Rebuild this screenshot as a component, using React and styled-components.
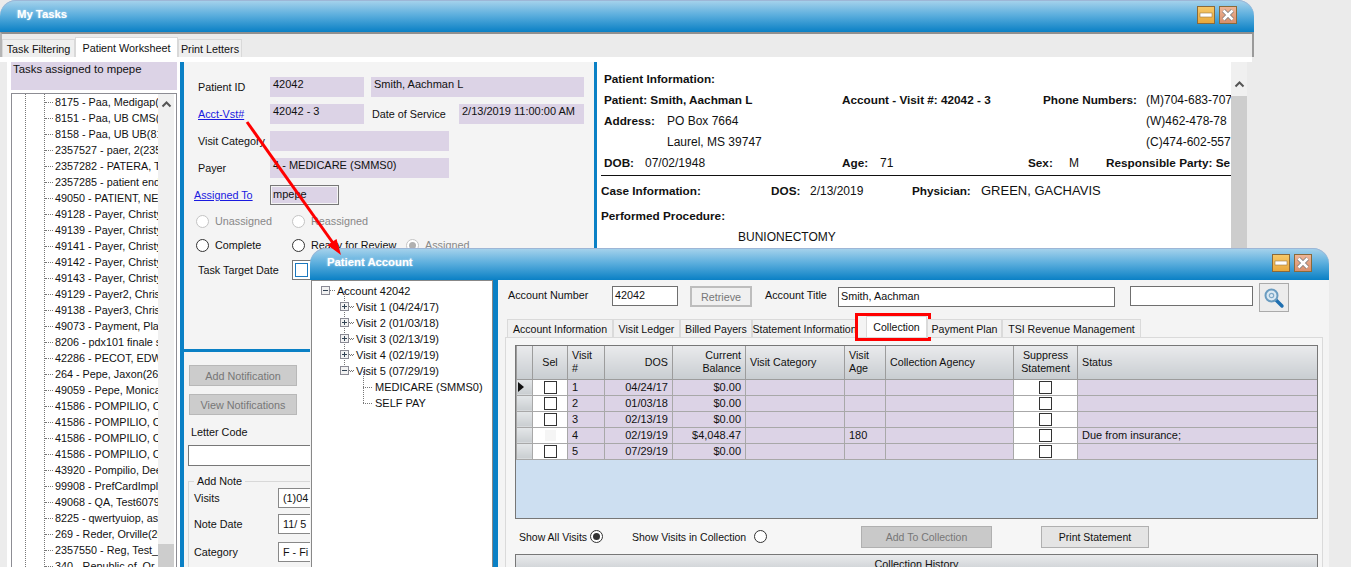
import React from 'react';
import styled, { createGlobalStyle, css } from 'styled-components';

const GlobalStyle = createGlobalStyle`
  html, body {
    margin: 0;
    padding: 0;
    background: #ebebeb;
    overflow: hidden;
  }
  * { box-sizing: border-box; }
`;

// desktop and windows

const Desktop = styled.div`
  position: relative;
  width: 1351px;
  height: 567px;
  overflow: hidden;
  background: #ebebeb;
  font-family: "Liberation Sans", Arial, sans-serif;
  font-size: 10.8px;
  color: #111;
`;

const Window = styled.section`
  position: absolute;
  left: ${(p) => p.$left}px;
  top: ${(p) => p.$top}px;
  width: ${(p) => p.$width}px;
  height: ${(p) => p.$height}px;
  display: flex;
  flex-direction: column;
`;

const TitleBar = styled.header`
  flex: none;
  height: 32px;
  display: flex;
  align-items: center;
  justify-content: space-between;
  padding: 0 ${(p) => p.$pad}px 0 17px;
  background: linear-gradient(#a9d4ec, #5fb0de 45%, #0a80c5);
  border-radius: 16px 16px 0 0;
  box-shadow: inset 0 1px 0 #9db6d6;
`;

const TitleText = styled.span`
  font-size: 11.3px;
  font-weight: bold;
  color: #fff;
  text-shadow: 0 0 2px #cfe6f5;
  margin-top: -4px;
`;

const WindowButtons = styled.div`
  display: flex;
  gap: 4px;
  margin-top: -2px;
`;

const WindowButton = styled.button`
  width: 18px;
  height: 18px;
  padding: 0;
  border: 1px solid #8a6a3a;
  display: flex;
  align-items: center;
  justify-content: center;
  background: ${(p) => (p.$close ? 'linear-gradient(#eeb596, #d98f6c)' : 'linear-gradient(#f6c868, #e9a83c)')};
`;

// main window

const TabStrip = styled.nav`
  flex: none;
  height: 25px;
  display: flex;
  align-items: flex-end;
  background: #ebebeb;
  border-top: 2px solid #8f8f8f;
  border-right: 2px solid #9a9a9a;
  border-left: 2px solid #b5b5b5;
`;

const MainTab = styled.div`
  width: ${(p) => p.$width}px;
  height: ${(p) => (p.$active ? 20 : 18)}px;
  display: flex;
  align-items: center;
  justify-content: center;
  background: ${(p) => (p.$active ? '#fff' : '#efefef')};
  border: 1px solid #d9d9d9;
  border-bottom: 0;
`;

const MainBody = styled.div`
  flex: 1;
  min-height: 0;
  display: grid;
  grid-template-columns: 180px 4px 410px 3px 650px;
  padding-top: 5px;
  background: linear-gradient(#fff 5px, #ebebeb 5px);
  margin-right: 2px;
`;

const LeftColumn = styled.div`
  background: #fff;
  border-left: 7px solid #ececec;
  padding: 0 3px 0 4px;
  display: flex;
  flex-direction: column;
  min-height: 0;
`;

const TaskHeading = styled.div`
  flex: none;
  height: 28px;
  padding: 1px 0 0 2px;
  font-size: 11.4px;
  background: #dcd3e6;
  margin-bottom: 3px;
`;

const TaskList = styled.div`
  flex: 1;
  min-height: 0;
  display: flex;
  border: 1px solid #8d8d94;
  border-bottom: 0;
`;

const TaskRows = styled.div`
  width: 146px;
  overflow: hidden;
`;

const TaskRow = styled.div`
  position: relative;
  height: 16px;
  line-height: 16px;
  padding-left: 43px;
  white-space: nowrap;
  background:
    repeating-linear-gradient(#777 0 1px, transparent 1px 2px) 13px 0 / 1px 100% no-repeat,
    repeating-linear-gradient(#777 0 1px, transparent 1px 2px) 32px 0 / 1px 100% no-repeat;

  &::before {
    content: '';
    position: absolute;
    left: 33px;
    top: 8px;
    width: 8px;
    border-top: 1px dotted #777;
  }
`;

const Scrollbar = styled.div`
  flex: none;
  width: ${(p) => p.$width}px;
  display: flex;
  flex-direction: column;
  align-items: center;
  background: #f0f0f0;
`;

const ScrollArrow = styled.div`
  flex: none;
  height: ${(p) => p.$height}px;
  padding-top: ${(p) => p.$offset ?? 0}px;
  display: flex;
  align-items: center;
  justify-content: center;
`;

const ScrollThumb = styled.div`
  width: 100%;
  flex: none;
  height: ${(p) => p.$height}px;
  margin-top: ${(p) => p.$gap}px;
  background: #cdcdcd;
`;

const BlueDivider = styled.div`
  background: #0a80c5;
`;

// worksheet form

const FormColumn = styled.div`
  display: flex;
  flex-direction: column;
  background: #f4f4f4;
  min-height: 0;
`;

const FormTop = styled.div`
  flex: none;
  height: 287px;
  padding: 15px 10px 0 14px;
`;

const FormRow = styled.div`
  display: grid;
  grid-template-columns: ${(p) => p.$cols};
  align-items: center;
  height: 20px;
  margin-bottom: ${(p) => p.$gap ?? 7}px;
  margin-left: ${(p) => p.$shift ?? 0}px;
  white-space: nowrap;
`;

const Field = styled.div`
  height: 20px;
  padding: 0 3px;
  font-size: 11px;
  line-height: 14px;
  background: #dcd3e6;
  white-space: nowrap;
`;

const BorderedField = styled(Field)`
  border: 1px solid #777;
  padding: 1px 2px;
  box-shadow: inset 0 0 0 1px #f4f4f4;
`;

const LinkLabel = styled.a`
  color: #1a1ae0;
  text-decoration: underline;
  margin-left: ${(p) => p.$pull ?? 0}px;
`;

const RadioLabel = styled.label`
  display: inline-flex;
  align-items: center;
  gap: ${(p) => p.$gap ?? 6}px;
  color: ${(p) => (p.$disabled ? '#888' : '#111')};
  white-space: nowrap;
`;

const RadioDot = styled.span`
  flex: none;
  width: 13px;
  height: 13px;
  border-radius: 50%;
  border: 1px solid ${(p) => (p.$disabled ? '#c4c4c4' : '#333')};
  background: #fff;
  display: flex;
  align-items: center;
  justify-content: center;

  &::after {
    content: '';
    display: ${(p) => (p.$checked ? 'block' : 'none')};
    width: 7px;
    height: 7px;
    border-radius: 50%;
    background: ${(p) => (p.$disabled ? '#b0b0b0' : '#333')};
  }
`;

const DateBox = styled.div`
  width: 40px;
  height: 20px;
  border: 1px solid #777;
  background: #fff;
  padding: 2px;
`;

const DateCheck = styled.div`
  width: 13px;
  height: 14px;
  border: 1px solid #1a78bf;
`;

const FormBottom = styled.div`
  flex: 1;
  border-top: 3px solid #0a80c5;
  padding: 13px 0 0 4px;
  display: flex;
  flex-direction: column;
  align-items: flex-start;
`;

const GrayButton = styled.button`
  width: 108px;
  height: 21px;
  margin: 0 0 8px 1px;
  padding: 0;
  border: 1px solid #b8b8b8;
  background: #cccccc;
  color: #777;
  font: inherit;
`;

const LetterLabel = styled.div`
  margin-top: 3px;
  height: 16px;
  padding-left: 3px;
`;

const LetterInput = styled.div`
  width: 300px;
  height: 21px;
  margin-top: 3px;
  border: 1px solid #777;
  background: #fff;
`;

const NoteBox = styled.fieldset`
  width: 300px;
  height: 110px;
  margin: 9px 0 0;
  padding: 0 0 0 5px;
  border: 1px solid #d8d8d8;
`;

const NoteLegend = styled.legend`
  padding: 0 3px;
  margin-left: 0;
  line-height: 13px;
`;

const NoteRow = styled.div`
  display: grid;
  grid-template-columns: 84px 1fr;
  align-items: center;
  height: 20px;
  margin-bottom: ${(p) => p.$gap}px;
`;

const NoteInput = styled.div`
  height: 20px;
  line-height: 18px;
  padding-left: 4px;
  border: 1px solid #888;
  background: #fff;
  white-space: nowrap;
`;

// patient information

const InfoColumn = styled.div`
  display: flex;
  background: #fff;
  min-height: 0;
  font-size: 12px;
`;

const InfoBody = styled.div`
  width: 634px;
  overflow: hidden;
  padding: 8px 0 0 4px;
`;

const InfoRow = styled.div`
  display: grid;
  grid-template-columns: ${(p) => p.$cols || '1fr'};
  height: 21px;
  line-height: 18px;
  padding-left: ${(p) => p.$indent ?? 3}px;
  white-space: nowrap;
  ${(p) => p.$rule && css`
    height: 22px;
    border-bottom: 1px solid #111;
    margin-bottom: 6px;
  `}
  ${(p) => p.$gap && css`margin-bottom: ${p.$gap}px;`}
`;

const B = styled.span`
  font-weight: bold;
  font-size: 11.75px;
`;

const Physician = styled.span`
  font-size: 13px;
`;

// patient account window

const AccountBody = styled.div`
  flex: 1;
  min-height: 0;
  display: grid;
  grid-template-columns: 182px 5px 1fr;
  padding-left: 1px;
  background: #f4f4f4;
`;

const TreePanel = styled.div`
  background: #fff;
  border: 1px solid #888;
  padding-top: 2px;
  font-size: 11px;
`;

const TreeRow = styled.div`
  position: relative;
  height: 16px;
  line-height: 16px;
  padding-left: ${(p) => p.$indent}px;
  white-space: nowrap;

  ${(p) => p.$rail && css`
    &::before {
      content: '';
      position: absolute;
      left: ${p.$rail}px;
      top: -8px;
      height: 16px;
      border-left: 1px dotted #777;
    }
    &::after {
      content: '';
      position: absolute;
      left: ${p.$rail}px;
      top: 8px;
      width: 9px;
      border-top: 1px dotted #777;
    }
  `}
`;

const TreeToggle = styled.span`
  position: absolute;
  z-index: 1;
  left: ${(p) => p.$left}px;
  top: 3px;
  width: 9px;
  height: 9px;
  border: 1px solid #8a8a94;
  background:
    linear-gradient(#345, #345) center / 5px 1px no-repeat,
    ${(p) => (p.$open ? 'none' : 'linear-gradient(#345, #345) center / 1px 5px no-repeat')},
    #f2f2f2;

  &::after {
    content: '';
    position: absolute;
    left: 8px;
    top: 3px;
    width: 5px;
    border-top: 1px dotted #777;
  }
`;

const AccountMain = styled.div`
  min-width: 0;
  padding: 6px 6px 0 7px;
  background: #f4f4f4;
  display: flex;
  flex-direction: column;
`;

const TopRow = styled.div`
  flex: none;
  display: flex;
  align-items: flex-start;
  height: 31px;
`;

const TopLabel = styled.span`
  padding-top: 3px;
  margin-left: ${(p) => p.$left ?? 0}px;
  width: ${(p) => p.$width}px;
  flex: none;
`;

const TextBox = styled.div`
  flex: none;
  width: ${(p) => p.$width}px;
  height: ${(p) => p.$height ?? 20}px;
  margin-left: ${(p) => p.$left ?? 0}px;
  margin-top: ${(p) => p.$top ?? 0}px;
  line-height: 16px;
  padding-left: 2px;
  border: 1px solid #6f6f6f;
  background: #fff;
`;

const RetrieveButton = styled.button`
  flex: none;
  width: 62px;
  height: 21px;
  margin-left: 12px;
  padding: 0;
  border: 2px solid #bdbdbd;
  background: #f0f0f0;
  color: #777;
  font: inherit;
`;

const SearchButton = styled.button`
  flex: none;
  width: 30px;
  height: 29px;
  margin: -3px 0 0 6px;
  padding: 0;
  border: 1px solid #aaa;
  background: #ececec;
  display: flex;
  align-items: center;
  justify-content: center;
`;

const AccountTabs = styled.nav`
  flex: none;
  height: 20px;
  display: flex;
  align-items: flex-end;
  padding-left: 2px;
`;

const AccountTab = styled.div`
  position: relative;
  height: ${(p) => (p.$active ? 21 : 18)}px;
  width: ${(p) => p.$width}px;
  margin-left: ${(p) => p.$left ?? 0}px;
  display: flex;
  align-items: center;
  justify-content: center;
  white-space: nowrap;
  font-size: 10.6px;
  background: ${(p) => (p.$active ? '#fff' : '#f0f0f0')};
  border: 1px solid #dadada;
  border-bottom: 0;
  ${(p) => p.$active && css`padding-bottom: 1px;`}
`;

// the red annotation round the tab
const RedBox = styled.span`
  position: absolute;
  left: -12px;
  right: -5px;
  top: -4px;
  bottom: -4px;
  border: 3px solid #f00;
  pointer-events: none;
`;

const TabPanel = styled.div`
  flex: 1;
  min-height: 0;
  padding: 7px 4px 0 9px;
  border: 1px solid #dadada;
  border-bottom: 0;
  background: #f6f6f6;
  display: flex;
  flex-direction: column;
`;

const GridFrame = styled.div`
  flex: none;
  height: 174px;
  border: 1px solid #777;
  background: #cddff1;
  overflow: hidden;
`;

const GridTable = styled.table`
  border-collapse: collapse;
  table-layout: fixed;
  width: 801px;
`;

const HeadCell = styled.th`
  height: 33px;
  padding: 0 4px;
  font-weight: normal;
  font-size: 10.7px;
  line-height: 13px;
  text-align: ${(p) => p.$align || 'left'};
  background: linear-gradient(#e9eaec, #c8cdd1);
  border: 1px solid #9c9c9c;
  border-top: 0;
  vertical-align: middle;
`;

const Cell = styled.td`
  height: 16px;
  padding: 0 4px;
  font-size: 11px;
  line-height: 14px;
  text-align: ${(p) => p.$align || 'left'};
  background: ${(p) => (p.$white ? '#fff' : '#dcd3e6')};
  border: 1px solid #a8a8a8;
  white-space: nowrap;
`;

const RowHeader = styled.td`
  height: 16px;
  padding: 0 0 0 1px;
  background: linear-gradient(#e4e7e9, #c9cdd0);
  border: 1px solid #a8a8a8;
`;

const GridCheck = styled.div`
  width: 13px;
  height: 13px;
  margin: 0 auto;
  border: 1px solid ${(p) => (p.$faint ? '#fff' : '#333')};
  background: ${(p) => (p.$faint ? '#f5f5f5' : '#fff')};
`;

const Caret = styled.div`
  width: 0;
  height: 0;
  border-left: 6px solid #111;
  border-top: 5px solid transparent;
  border-bottom: 5px solid transparent;
`;

const ControlRow = styled.div`
  flex: none;
  height: 35px;
  padding-left: 4px;
  display: grid;
  grid-template-columns: 113px 229px 180px 108px;
  align-items: center;
  font-size: 10.5px;
`;

const FlatButton = styled.button`
  width: ${(p) => p.$width}px;
  height: 22px;
  padding: 0;
  border: 1px solid #b0b0b0;
  background: ${(p) => (p.$disabled ? '#c9c9c9' : '#e4e4e4')};
  color: ${(p) => (p.$disabled ? '#777' : '#111')};
  font: inherit;
`;

const HistoryHeader = styled.div`
  flex: none;
  height: 20px;
  text-align: center;
  line-height: 17px;
  padding-top: 1px;
  border: 1px solid #777;
  background: linear-gradient(#e9eaec, #c8cdd1);
`;

const Overlay = styled.svg`
  position: absolute;
  left: 0;
  top: 0;
  pointer-events: none;
`;

const tasks = [
  '8175 - Paa, Medigap(', '8151 - Paa, UB CMS(', '8158 - Paa, UB UB(81',
  '2357527 - paer, 2(235', '2357282 - PATERA, T', '2357285 - patient end',
  '49050 - PATIENT, NE', '49128 - Payer, Christy', '49139 - Payer, Christy',
  '49141 - Payer, Christy', '49142 - Payer, Christy', '49143 - Payer, Christy',
  '49129 - Payer2, Christ', '49138 - Payer3, Christ', '49073 - Payment, Plan',
  '8206 - pdx101 finale s', '42286 - PECOT, EDW', '264 - Pepe, Jaxon(264',
  '49059 - Pepe, Monica', '41586 - POMPILIO, C', '41586 - POMPILIO, C',
  '41586 - POMPILIO, C', '41586 - POMPILIO, C', '43920 - Pompilio, Dee',
  '99908 - PrefCardImpla', '49068 - QA, Test6079', '8225 - qwertyuiop, asd',
  '269 - Reder, Orville(26', '2357550 - Reg, Test_', '340 - Republic of, Or',
];

const visits = [
  { n: 1, dos: '04/24/17', bal: '$0.00' },
  { n: 2, dos: '01/03/18', bal: '$0.00' },
  { n: 3, dos: '02/13/19', bal: '$0.00' },
  { n: 4, dos: '02/19/19', bal: '$4,048.47', age: '180', status: 'Due from insurance;', faint: true },
  { n: 5, dos: '07/29/19', bal: '$0.00' },
];

const colWidths = [16, 35, 37, 68, 73, 99, 41, 128, 64, 240];

const Chevron = () => (
  <svg width="11" height="8" viewBox="0 0 11 8">
    <path d="M1.5 6.5 5.5 2.5 9.5 6.5" fill="none" stroke="#555" strokeWidth="2" />
  </svg>
);

const WindowControls = () => (
  <WindowButtons>
    <WindowButton aria-label="Minimize">
      <svg width="14" height="14" viewBox="0 0 14 14">
        <rect x="1" y="5" width="12" height="4" fill="#fff" stroke="#9a7a45" strokeWidth="0.6" />
      </svg>
    </WindowButton>
    <WindowButton $close aria-label="Close">
      <svg width="14" height="14" viewBox="0 0 14 14">
        <path d="M2.5 2.5 11.5 11.5M11.5 2.5 2.5 11.5" stroke="#777" strokeWidth="4" />
        <path d="M2.5 2.5 11.5 11.5M11.5 2.5 2.5 11.5" stroke="#fff" strokeWidth="2.6" />
      </svg>
    </WindowButton>
  </WindowButtons>
);

const MagnifierIcon = () => (
  <svg width="22" height="22" viewBox="0 0 22 22">
    <path d="M12.5 12.5 19 19" stroke="#1f6fb0" strokeWidth="3.4" strokeLinecap="round" />
    <circle cx="8.5" cy="8.5" r="6" fill="#dbe9f3" stroke="#6a9cc0" strokeWidth="2" />
    <circle cx="8.5" cy="8.5" r="2.2" fill="none" stroke="#7fa9c7" strokeWidth="1.2" />
  </svg>
);

const App = () => {
  return (
    <Desktop>
      <GlobalStyle />

      <Window $left={0} $top={0} $width={1254} $height={567}>
        <TitleBar $pad={17}>
          <TitleText>My Tasks</TitleText>
          <WindowControls />
        </TitleBar>
        <TabStrip>
          <MainTab $width={73}>Task Filtering</MainTab>
          <MainTab $active $width={103}>Patient Worksheet</MainTab>
          <MainTab $width={64}>Print Letters</MainTab>
        </TabStrip>
        <MainBody>
          <LeftColumn>
            <TaskHeading>Tasks assigned to mpepe</TaskHeading>
            <TaskList>
              <TaskRows>
                {tasks.map((t, i) => (
                  <TaskRow key={i}>{t}</TaskRow>
                ))}
              </TaskRows>
              <Scrollbar $width={16}>
                <ScrollArrow $height={20}><Chevron /></ScrollArrow>
                <ScrollThumb $height={40} $gap={430} />
              </Scrollbar>
            </TaskList>
          </LeftColumn>
          <BlueDivider />
          <FormColumn>
            <FormTop>
              <FormRow $cols="72px 94px 7px 213px">
                <span>Patient ID</span>
                <Field>42042</Field>
                <span />
                <Field>Smith, Aachman L</Field>
              </FormRow>
              <FormRow $cols="72px 94px 8px 87px 125px">
                <LinkLabel href="#acct">Acct-Vst#</LinkLabel>
                <Field>42042 - 3</Field>
                <span />
                <span>Date of Service</span>
                <Field>2/13/2019 11:00:00 AM</Field>
              </FormRow>
              <FormRow $cols="72px 179px">
                <span>Visit Category</span>
                <Field />
              </FormRow>
              <FormRow $cols="72px 179px">
                <span>Payer</span>
                <Field>4 - MEDICARE (SMMS0)</Field>
              </FormRow>
              <FormRow $cols="72px 69px" $gap={6}>
                <LinkLabel href="#assigned" $pull={-4}>Assigned To</LinkLabel>
                <BorderedField>mpepe</BorderedField>
              </FormRow>
              <FormRow $cols="96px 1fr" $gap={4} $shift={-2}>
                <RadioLabel $disabled><RadioDot $disabled />Unassigned</RadioLabel>
                <RadioLabel $disabled><RadioDot $disabled />Reassigned</RadioLabel>
              </FormRow>
              <FormRow $cols="96px 114px 1fr" $gap={5} $shift={-2}>
                <RadioLabel><RadioDot />Complete</RadioLabel>
                <RadioLabel><RadioDot />Ready for Review</RadioLabel>
                <RadioLabel $disabled><RadioDot $disabled $checked />Assigned</RadioLabel>
              </FormRow>
              <FormRow $cols="94px 1fr">
                <span>Task Target Date</span>
                <DateBox><DateCheck /></DateBox>
              </FormRow>
            </FormTop>
            <FormBottom>
              <GrayButton disabled>Add Notification</GrayButton>
              <GrayButton disabled>View Notifications</GrayButton>
              <LetterLabel>Letter Code</LetterLabel>
              <LetterInput />
              <NoteBox>
                <NoteLegend>Add Note</NoteLegend>
                <NoteRow $gap={6}>
                  <span>Visits</span>
                  <NoteInput>(1)04</NoteInput>
                </NoteRow>
                <NoteRow $gap={8}>
                  <span>Note Date</span>
                  <NoteInput>11/  5</NoteInput>
                </NoteRow>
                <NoteRow $gap={0}>
                  <span>Category</span>
                  <NoteInput>F - Fi</NoteInput>
                </NoteRow>
              </NoteBox>
            </FormBottom>
          </FormColumn>
          <BlueDivider />
          <InfoColumn>
            <InfoBody>
              <InfoRow><B>Patient Information:</B></InfoRow>
              <InfoRow $cols="238px 201px 103px 1fr">
                <B>Patient: Smith, Aachman L</B>
                <B>Account - Visit #: 42042 - 3</B>
                <B>Phone Numbers:</B>
                <span>(M)704-683-707</span>
              </InfoRow>
              <InfoRow $cols="63px 479px 1fr">
                <B>Address:</B>
                <span>PO Box 7664</span>
                <span>(W)462-478-78</span>
              </InfoRow>
              <InfoRow $cols="63px 479px 1fr">
                <span />
                <span>Laurel, MS 39747</span>
                <span>(C)474-602-557</span>
              </InfoRow>
              <InfoRow $rule $cols="41px 197px 38px 148px 41px 37px 1fr">
                <B>DOB:</B>
                <span>07/02/1948</span>
                <B>Age:</B>
                <span>71</span>
                <B>Sex:</B>
                <span>M</span>
                <B>Responsible Party: Se</B>
              </InfoRow>
              <InfoRow $indent={0} $cols="170px 39px 102px 69px 1fr" $gap={4}>
                <B>Case Information:</B>
                <B>DOS:</B>
                <span>2/13/2019</span>
                <B>Physician:</B>
                <Physician>GREEN, GACHAVIS</Physician>
              </InfoRow>
              <InfoRow $indent={0}><B>Performed Procedure:</B></InfoRow>
              <InfoRow $indent={137}>BUNIONECTOMY</InfoRow>
            </InfoBody>
            <Scrollbar $width={16}>
              <ScrollArrow $height={34} $offset={10}><Chevron /></ScrollArrow>
              <ScrollThumb $height={480} $gap={0} />
            </Scrollbar>
          </InfoColumn>
        </MainBody>
      </Window>

      <Window $left={310} $top={248} $width={1019} $height={319}>
        <TitleBar $pad={17}>
          <TitleText>Patient Account</TitleText>
          <WindowControls />
        </TitleBar>
        <AccountBody>
          <TreePanel>
            <TreeRow $indent={25}>
              <TreeToggle $open $left={9} />
              Account 42042
            </TreeRow>
            <TreeRow $indent={44} $rail={32}><TreeToggle $left={28} />Visit 1 (04/24/17)</TreeRow>
            <TreeRow $indent={44} $rail={32}><TreeToggle $left={28} />Visit 2 (01/03/18)</TreeRow>
            <TreeRow $indent={44} $rail={32}><TreeToggle $left={28} />Visit 3 (02/13/19)</TreeRow>
            <TreeRow $indent={44} $rail={32}><TreeToggle $left={28} />Visit 4 (02/19/19)</TreeRow>
            <TreeRow $indent={44} $rail={32}><TreeToggle $open $left={28} />Visit 5 (07/29/19)</TreeRow>
            <TreeRow $indent={63} $rail={51}>MEDICARE (SMMS0)</TreeRow>
            <TreeRow $indent={63} $rail={51}>SELF PAY</TreeRow>
          </TreePanel>
          <BlueDivider />
          <AccountMain>
            <TopRow>
              <TopLabel $left={3} $width={104}>Account Number</TopLabel>
              <TextBox $width={66}>42042</TextBox>
              <RetrieveButton disabled>Retrieve</RetrieveButton>
              <TopLabel $left={13} $width={73}>Account Title</TopLabel>
              <TextBox $width={277} $top={1}>Smith, Aachman</TextBox>
              <TextBox $width={123} $left={15} />
              <SearchButton aria-label="Search"><MagnifierIcon /></SearchButton>
            </TopRow>
            <AccountTabs>
              <AccountTab $width={106}>Account Information</AccountTab>
              <AccountTab $width={67}>Visit Ledger</AccountTab>
              <AccountTab $width={72}>Billed Payers</AccountTab>
              <AccountTab $width={105}>Statement Information</AccountTab>
              <AccountTab $active $left={9} $width={61}>Collection<RedBox /></AccountTab>
              <AccountTab $width={75}>Payment Plan</AccountTab>
              <AccountTab $width={139}>TSI Revenue Management</AccountTab>
            </AccountTabs>
            <TabPanel>
              <GridFrame>
                <GridTable>
                  <colgroup>
                    {colWidths.map((w, i) => <col key={i} width={w} />)}
                  </colgroup>
                  <thead>
                    <tr>
                      <HeadCell />
                      <HeadCell $align="center">Sel</HeadCell>
                      <HeadCell>Visit #</HeadCell>
                      <HeadCell $align="right">DOS</HeadCell>
                      <HeadCell $align="right">Current Balance</HeadCell>
                      <HeadCell>Visit Category</HeadCell>
                      <HeadCell>Visit Age</HeadCell>
                      <HeadCell>Collection Agency</HeadCell>
                      <HeadCell $align="center">Suppress Statement</HeadCell>
                      <HeadCell>Status</HeadCell>
                    </tr>
                  </thead>
                  <tbody>
                    {visits.map((v, i) => (
                      <tr key={v.n}>
                        <RowHeader>{i === 0 && <Caret />}</RowHeader>
                        <Cell $white><GridCheck $faint={v.faint} /></Cell>
                        <Cell>{v.n}</Cell>
                        <Cell $align="right">{v.dos}</Cell>
                        <Cell $align="right">{v.bal}</Cell>
                        <Cell />
                        <Cell>{v.age}</Cell>
                        <Cell />
                        <Cell $white><GridCheck /></Cell>
                        <Cell>{v.status}</Cell>
                      </tr>
                    ))}
                  </tbody>
                </GridTable>
              </GridFrame>
              <ControlRow>
                <RadioLabel $gap={3}>Show All Visits<RadioDot $checked /></RadioLabel>
                <RadioLabel $gap={8}>Show Visits in Collection<RadioDot /></RadioLabel>
                <FlatButton $disabled $width={131} disabled>Add To Collection</FlatButton>
                <FlatButton $width={108}>Print Statement</FlatButton>
              </ControlRow>
              <HistoryHeader>Collection History</HistoryHeader>
            </TabPanel>
          </AccountMain>
        </AccountBody>
      </Window>

      <Overlay width="1351" height="567" viewBox="0 0 1351 567">
        <path d="M247 122 333 243" stroke="#f00" strokeWidth="3" />
        <path d="M341 255 327.5 245 336.5 239Z" fill="#f00" />
      </Overlay>
    </Desktop>
  );
};

export default App;
